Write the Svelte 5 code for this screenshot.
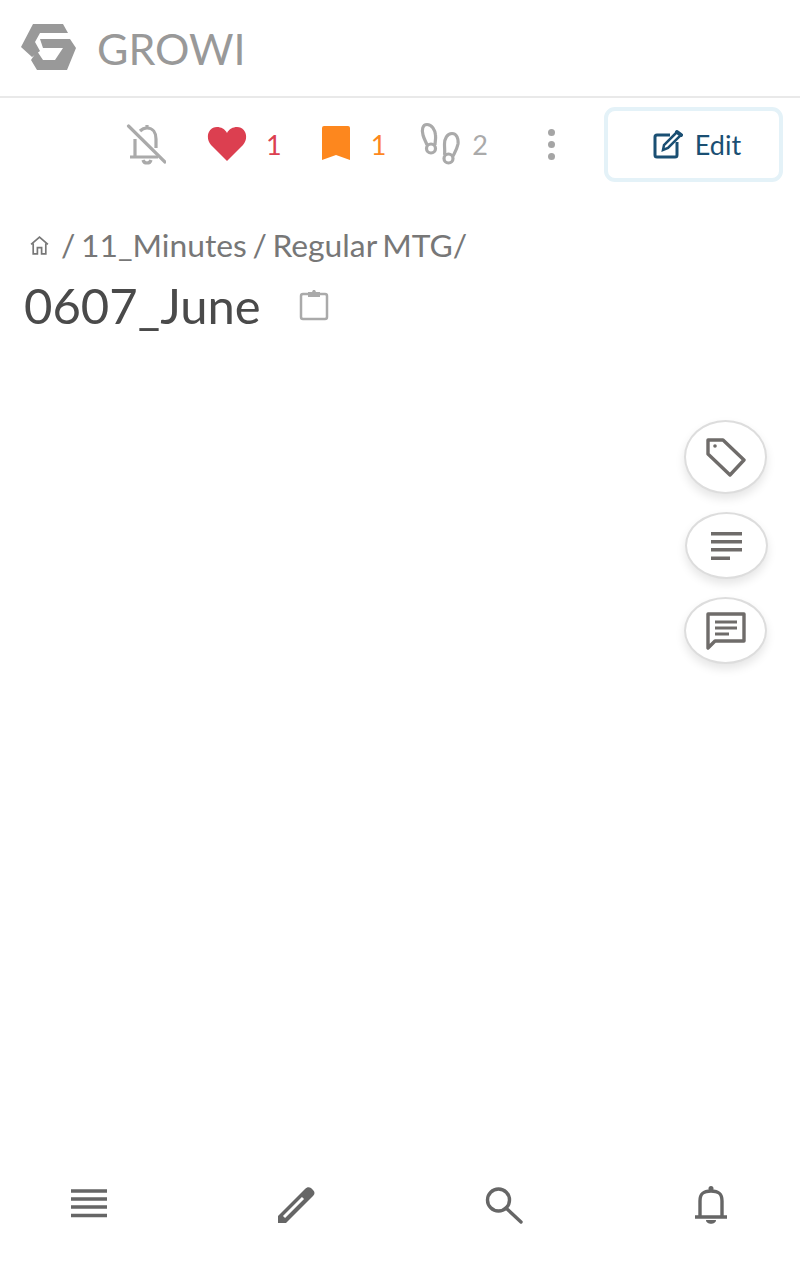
<script lang="ts">
  const tabs = ['menu', 'pencil', 'search', 'bell'];
</script>

<div class="page">
  <header class="navbar">
    <svg class="logo" viewBox="0 0 55 48" width="55" height="48">
      <path d="M12 0H42L47 9H19L14 18 19 27 11 33 0 23Z" fill="#999" />
      <path d="M19 15H49L55 24 46 46H16L10 36 16 27 22 36H34L42 24H22Z" fill="#999" />
    </svg>
    <span class="brand">GROWI</span>
  </header>

  <div class="actions">
    <button class="action mute" aria-label="Subscribe">
      <svg viewBox="0 0 40 44" width="40" height="44" fill="none" stroke="#aaa" stroke-width="3.200">
        <path d="M21 3v4M14 9c2-2 4-3 7-3 6 0 9 5 9 11v9M9 17v18M4 35h28M17 38c1 4 7 4 8 0" />
        <path d="M2.500 4 39 40" stroke-linecap="round" />
      </svg>
    </button>
    <div class="action like">
      <svg viewBox="0 0 40 36" width="40" height="36">
        <path d="M20 35 4 19C-2 12 1 1 10 1c4 0 8 2 10 6 2-4 6-6 10-6 9 0 12 11 6 18Z" fill="#dc3f50" />
      </svg>
      <span>1</span>
    </div>
    <div class="action mark">
      <svg viewBox="0 0 28 36" width="28" height="36">
        <path d="M2 0H26a2 2 0 0 1 2 2V34L14 29 0 34V2a2 2 0 0 1 2-2Z" fill="#fd871e" />
      </svg>
      <span>1</span>
    </div>
    <div class="action seen">
      <svg viewBox="0 0 40 44" width="40" height="44" fill="none" stroke="#aaa" stroke-width="3.200">
        <path d="M7 2.500C2.500 2.500 1.500 8 3 13c1 4 3 7 4 10M7 2.500c5 0 8 5.500 8.500 10.500.5 4-.5 7-.5 10" />
        <circle cx="11" cy="26.500" r="4.500" />
        <path d="M32 11.500c5 0 6.500 5.500 6 10.500-1 5-3 8-5 12M32 11.500c-5 0-7.500 5.500-7.500 10.500 0 4 .5 8 0 11" />
        <circle cx="28.500" cy="36.500" r="4.500" />
      </svg>
      <span>2</span>
    </div>
    <button class="dots" aria-label="More">
      <i></i><i></i><i></i>
    </button>
    <button class="edit">
      <svg viewBox="0 0 32 32" width="32" height="32" fill="none" stroke="#1a4f73" stroke-width="3">
        <path d="M26 14v13a2 2 0 0 1-2 2H6a2 2 0 0 1-2-2V9a2 2 0 0 1 2-2h13" />
        <path d="M12 22l1-5L26 4l4 3-13 13Z" stroke-width="2.500" />
        <path d="M26 4l4 3" stroke-width="4" stroke-linecap="round" />
      </svg>
      Edit
    </button>
  </div>

  <div class="heading">
    <div class="crumbs">
      <svg viewBox="0 0 20 20" width="21" height="21" fill="none" stroke="#777" stroke-width="1.600">
        <path d="M2 9l8-7 8 7M4 8v10h4v-6h4v6h4V8" />
      </svg>
      <span class="sep">/</span> 11_Minutes / Regular MTG/
    </div>
    <div class="title">
      <h1>0607_June</h1>
      <svg viewBox="0 0 30 32" width="30" height="32" fill="none" stroke="#aaa" stroke-width="2.500">
        <rect x="2" y="5" width="26" height="25" rx="2" />
        <path d="M9 3h4l1-2h2l1 2h4v5H9Z" fill="#aaa" stroke="none" />
      </svg>
    </div>
  </div>

  <div class="side">
    <button class="round tag" aria-label="Tags">
      <svg viewBox="0 0 40 40" width="40" height="40" fill="none" stroke="#6f6c6a" stroke-width="3.400">
        <path d="M2 3h15l21 20-14 15L2 17Z" stroke-linejoin="round" />
        <circle cx="9" cy="9" r="1.800" fill="#6f6c6a" stroke="none" />
      </svg>
    </button>
    <button class="round shifted" aria-label="Contents">
      <svg viewBox="0 0 32 32" width="32" height="32" fill="#6f6c6a">
        <rect y="2" width="31" height="3.500" />
        <rect y="10" width="31" height="3.500" />
        <rect y="18" width="31" height="3.500" />
        <rect y="26.500" width="19" height="3.500" />
      </svg>
    </button>
    <button class="round" aria-label="Comments">
      <svg viewBox="0 0 40 40" width="40" height="40" fill="none" stroke="#6f6c6a" stroke-width="3.400">
        <path d="M2 3h36v27H9l-7 7Z" stroke-linejoin="round" />
        <path d="M9 11h22M9 17h22M9 23h14" stroke-width="2.800" />
      </svg>
    </button>
  </div>

  <nav class="tabbar">
    {#each tabs as tab}
      <button class="tab" aria-label={tab}>
        <svg viewBox="0 0 38 38" width="38" height="38" fill="none" stroke="#666" stroke-width="3.400">
          {#if tab === 'menu'}
            <path d="M1 5h36M1 13h36M1 21h36M1 29.500h36" />
          {:else if tab === 'pencil'}
            <path d="M1 37v-7L28 3c2-2 4-2 6-1l2 2c2 2 2 4 0 6L9 37Z" fill="#666" stroke="none" />
            <path d="M7 31 26 12" stroke="#fff" stroke-width="3" />
          {:else if tab === 'search'}
            <circle cx="13.500" cy="14" r="11" />
            <path d="M21 22l15 14" stroke-linecap="round" />
          {:else}
            <path d="M8 31V15C8 7 12 5 19 5s11 2 11 10v16M3 31h32" />
            <circle cx="19" cy="2.500" r="2.500" fill="#666" stroke="none" />
            <path d="M14 34h10c0 5-10 5-10 0Z" fill="#666" stroke="none" />
          {/if}
        </svg>
      </button>
    {/each}
  </nav>
</div>

<style>
  :global(body) {
    margin: 0;
    background: #fff;
    font-family: Lato, 'Open Sans', sans-serif;
  }

  button {
    border: 0;
    background: none;
    padding: 0;
    font: inherit;
  }

  .page {
    position: relative;
    display: flex;
    flex-direction: column;
    height: 1268px;
  }

  .navbar {
    display: flex;
    align-items: center;
    gap: 21px;
    height: 98px;
    padding-left: 21px;
    border-bottom: 2px solid #e9e9e9;
    box-sizing: border-box;
  }

  .brand {
    font-size: 43px;
    color: #999;
    line-height: 50px;
    margin-top: 2px;
  }

  .actions {
    display: flex;
    align-items: center;
    justify-content: flex-end;
    height: 74px;
    margin-top: 9px;
    padding-right: 17px;
    box-sizing: border-box;
  }

  .action {
    display: flex;
    align-items: center;
    font-size: 27px;
  }

  .mute {
    margin-right: 41px;
  }

  .like {
    gap: 19px;
    color: #dc3f50;
    margin-right: 40px;
  }

  .mark {
    gap: 21px;
    color: #fd871e;
    margin-right: 34px;
  }

  .seen {
    gap: 12px;
    color: #aaa;
    margin-right: 60px;
  }

  .dots {
    display: flex;
    flex-direction: column;
    gap: 5px;
    margin-right: 49px;
  }

  .dots i {
    width: 7px;
    height: 7px;
    border-radius: 50%;
    background: #a5a5a5;
  }

  .edit {
    display: flex;
    align-items: center;
    justify-content: center;
    gap: 12px;
    width: 179px;
    height: 75px;
    padding-left: 5px;
    border: 4px solid #e4f2f8;
    border-radius: 11px;
    box-sizing: border-box;
    color: #1a4f73;
    font-size: 27px;
  }

  .heading {
    padding: 46px 0 0 24px;
  }

  .crumbs {
    display: flex;
    align-items: center;
    font-size: 31.800px;
    line-height: 36px;
    word-spacing: -2.500px;
    color: #777;
    white-space: pre;
    padding-left: 5px;
  }

  .sep {
    margin-left: 11px;
  }

  .title {
    display: flex;
    align-items: center;
    gap: 38px;
    margin-top: 14px;
  }

  h1 {
    margin: 0;
    font-size: 49px;
    font-weight: 400;
    line-height: 56px;
    color: #4a4a4a;
  }

  .side {
    position: absolute;
    top: 420px;
    right: 33px;
    display: flex;
    flex-direction: column;
    gap: 18px;
  }

  .round {
    display: flex;
    align-items: center;
    justify-content: center;
    width: 83px;
    height: 67px;
    border: 2px solid #ddd;
    border-radius: 50%;
    box-sizing: border-box;
    background: #fff;
    box-shadow: 0 5px 10px rgba(0, 0, 0, 0.1);
  }

  .tag {
    height: 74px;
  }

  .shifted {
    transform: translateX(1px);
  }

  .tabbar {
    position: absolute;
    left: 70px;
    right: 70px;
    top: 1186px;
    display: flex;
    justify-content: space-between;
  }

  .tab {
    display: flex;
  }
</style>
